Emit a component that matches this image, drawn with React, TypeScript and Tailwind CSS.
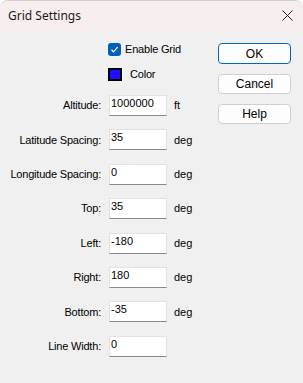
const rows = [
  { label: "Altitude:", value: "1000000", unit: "ft" },
  { label: "Latitude Spacing:", value: "35", unit: "deg" },
  { label: "Longitude Spacing:", value: "0", unit: "deg" },
  { label: "Top:", value: "35", unit: "deg" },
  { label: "Left:", value: "-180", unit: "deg" },
  { label: "Right:", value: "180", unit: "deg" },
  { label: "Bottom:", value: "-35", unit: "deg" },
  { label: "Line Width:", value: "0", unit: "" },
];

const DialogButton = ({ label, primary }: { label: string; primary?: boolean }) => {
  return (
    <button
      className={
        primary
          ? "h-[21px] w-[73px] rounded-[4px] border border-[#0067c0] bg-[#fdfdfd] text-[12px] leading-none text-black"
          : "h-[20px] w-[73px] rounded-[4px] border border-[#d0d0d0] bg-[#fdfdfd] text-[12px] leading-none text-black"
      }
    >
      {label}
    </button>
  );
};

const App = () => {
  return (
    <div className="h-[383px] w-[303px] bg-white">
      <div className="h-full w-full overflow-hidden rounded-t-[8px] border-t border-[#cfcfcf] bg-[#f0f0f0] font-['Liberation_Sans',sans-serif] text-[11px] text-black">
        <div className="flex h-[30px] items-center justify-between bg-[#f8eeee] pl-[8px] pr-[10px]">
          <span className="font-['Noto_Sans',sans-serif] text-[12px] text-[#1a1a1a]">Grid Settings</span>
          <svg width="11" height="11" viewBox="0 0 11 11" className="mb-[1px]">
            <path d="M0.5 0.5 L10.5 10.5 M10.5 0.5 L0.5 10.5" stroke="#222" strokeWidth="1" />
          </svg>
        </div>

        <div className="flex pt-[12px]">
          <div className="w-[218px]">
            <div className="flex h-[13px] items-center pl-[108px]">
              <span className="flex h-[13px] w-[13px] items-center justify-center rounded-[3px] bg-[#005fb8]">
                <svg width="9" height="9" viewBox="0 0 9 9">
                  <path d="M1.5 4.8 L3.6 6.8 L7.6 2.2" stroke="white" strokeWidth="1.2" fill="none" />
                </svg>
              </span>
              <span className="ml-[4px] tracking-[-0.2px]">Enable Grid</span>
            </div>
            <div className="mt-[12px] flex h-[13px] items-center pl-[108px]">
              <span className="h-[13px] w-[14px] border-2 border-black bg-[#2010ff]" />
              <span className="ml-[8px] tracking-[-0.2px]">Color</span>
            </div>

            <div className="mt-[14px] flex flex-col gap-[13.4px]">
              {rows.map((r) => (
                <div key={r.label} className="flex h-[21px] items-center">
                  <span className="w-[101px] text-right tracking-[-0.2px]">{r.label}</span>
                  <div className="ml-[8px] h-[21px] w-[58px] border border-[#e2e2e2] border-b-[#8a8a8a] bg-white pl-[1px] pt-[1px] leading-[13px]">
                    {r.value}
                  </div>
                  <span className="ml-[7px]">{r.unit}</span>
                </div>
              ))}
            </div>
          </div>

          <div className="flex flex-col gap-[10px]">
            <DialogButton label="OK" primary />
            <DialogButton label="Cancel" />
            <DialogButton label="Help" />
          </div>
        </div>
      </div>
    </div>
  );
};

export default App;
